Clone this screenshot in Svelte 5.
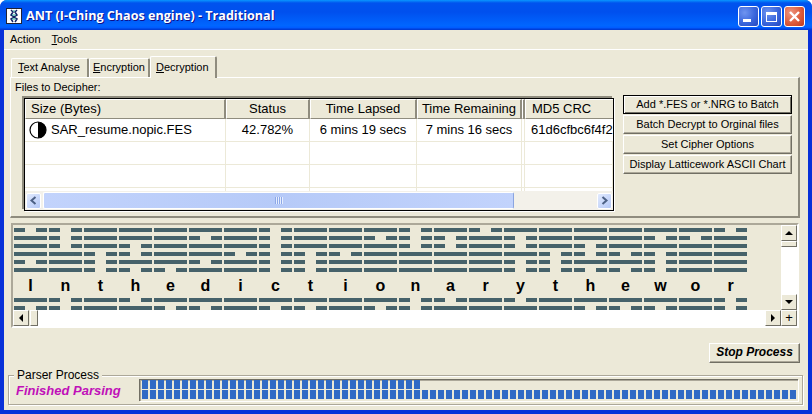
<script>
  const upper = [
    'BBSSSSSBSSSBSBSSSSSSB',
    'SBSSSBSBSSBBBSBSSSBBS',
    'SBSBSSSBSSSBBSBSBSSSS',
    'SSBBSSBBBBSSSSSBBBBSS',
    'BSBSSBSBBSSSSSBBSSBSS',
    'SSBBBSSBBSSSSSBBBBBSS'
  ];
  const lower = [
    'SBSBSSSSSSSBBSBSSSSSB',
    'BBSSBBSBBSBBSSSSBBBSB'
  ];
  const letters = 'Inthedictionarythewor'.split('');
  const columns = [
    { label: 'Size (Bytes)', value: 'SAR_resume.nopic.FES', cls: 'first' },
    { label: 'Status', value: '42.782%', cls: 'center' },
    { label: 'Time Lapsed', value: '6 mins 19 secs', cls: 'center' },
    { label: 'Time Remaining', value: '7 mins 16 secs', cls: 'center' },
    { label: '', value: '', cls: '' },
    { label: 'MD5 CRC', value: '61d6cfbc6f4f2', cls: 'md5' }
  ];
  const buttons = ['Add *.FES or *.NRG to Batch', 'Batch Decrypt to Orginal files', 'Set Cipher Options', 'Display Latticework ASCII Chart'];
  const topCells = Array(35).fill(0);
  const bottomCells = Array(82).fill(0);
  const emptyRows = [0, 1, 2];
</script>

<div class="window">
  <header class="titlebar">
    <svg class="appicon" width="16" height="16" viewBox="0 0 16 16">
      <rect x="0.5" y="0.5" width="15" height="15" fill="#fff" stroke="#223" />
      <path d="M5 2l2 2-2 3 3 2-3 2 2 3M11 2l-2 2 2 3-3 2 3 2-2 3" fill="none" stroke="#126" stroke-width="1.5" />
      <path d="M7 3h2M6 7h4M6 11h4" stroke="#2a9" stroke-width="1" />
    </svg>
    <span class="title">ANT (I-Ching Chaos engine) - Traditional</span>
    <div class="winbtns">
      <div class="winbtn"><span class="min"></span></div>
      <div class="winbtn"><span class="max"></span></div>
      <div class="winbtn close">
        <svg width="13" height="13" viewBox="0 0 13 13"><path d="M2 2l9 9M11 2l-9 9" stroke="#fff" stroke-width="2.4" /></svg>
      </div>
    </div>
  </header>

  <div class="client">
    <nav class="menu">
      <span>Action</span>
      <span><u>T</u>ools</span>
    </nav>

    <div class="tabs">
      <div class="tab t1"><u>T</u>ext Analyse</div>
      <div class="tab t2"><u>E</u>ncryption</div>
      <div class="tab active"><u>D</u>ecryption</div>
    </div>

    <section class="panel">
      <div class="files-label">Files to Decipher:</div>
      <div class="panel-row">
        <div class="listframe">
          <div class="list">
            <div class="list-head">
              {#each columns as c}
                <div class="hcell {c.cls}">{c.label}</div>
              {/each}
            </div>
            <div class="list-row">
              {#each columns as c}
                <div class="cell {c.cls}">
                  {#if c.cls === 'first'}
                    <svg class="moon" width="18" height="18" viewBox="0 0 18 18">
                      <circle cx="9" cy="9" r="8" fill="#fff" stroke="#000" stroke-width="1.2" />
                      <path d="M9 1a8 8 0 0 1 0 16z" fill="#000" />
                    </svg>
                  {/if}
                  {c.value}
                </div>
              {/each}
            </div>
            {#each emptyRows as r}
              <div class="list-row">
                {#each columns as c}
                  <div class="cell"></div>
                {/each}
              </div>
            {/each}
          </div>
          <div class="hbar">
            <div class="xpbtn">
              <svg width="9" height="9" viewBox="0 0 9 9"><path d="M6.5 1L2.5 4.5l4 3.5" fill="none" stroke="#4d6185" stroke-width="2" /></svg>
            </div>
            <div class="xpthumb"><span class="grip"></span></div>
            <div class="xpbtn">
              <svg width="9" height="9" viewBox="0 0 9 9"><path d="M2.5 1l4 3.5-4 3.5" fill="none" stroke="#4d6185" stroke-width="2" /></svg>
            </div>
          </div>
        </div>
        <div class="actions">
          {#each buttons as b, i}
            <div class="btn" class:default={i === 0}>{b}</div>
          {/each}
        </div>
      </div>
    </section>

    <section class="lattice-box">
      <div class="lattice-main">
        <div class="lattice">
          {#each upper as row}
            <div class="bars">
              {#each row.split('') as t}
                <div class="bar" class:broken={t === 'B'}><i></i>{#if t === 'B'}<i></i>{/if}</div>
              {/each}
            </div>
          {/each}
          <div class="letters">
            {#each letters as l}<span>{l}</span>{/each}
          </div>
          {#each lower as row}
            <div class="bars">
              {#each row.split('') as t}
                <div class="bar" class:broken={t === 'B'}><i></i>{#if t === 'B'}<i></i>{/if}</div>
              {/each}
            </div>
          {/each}
        </div>
        <div class="vbar">
          <div class="cbtn"><span class="arrow up"></span></div>
          <div class="cbtn vthumb"></div>
          <div class="track"></div>
          <div class="cbtn"><span class="arrow down"></span></div>
        </div>
      </div>
      <div class="hscroll">
        <div class="cbtn"><span class="arrow left"></span></div>
        <div class="cbtn hthumb"></div>
        <div class="track"></div>
        <div class="cbtn"><span class="arrow right"></span></div>
        <div class="cbtn plus">+</div>
      </div>
    </section>

    <div class="stop-row">
      <div class="stop">Stop Process</div>
    </div>

    <section class="group">
      <span class="legend">Parser Process</span>
      <div class="finished">Finished Parsing</div>
      <div class="progress">
        <div class="prow">{#each topCells as _}<b></b>{/each}</div>
        <div class="prow">{#each bottomCells as _}<b></b>{/each}</div>
      </div>
    </section>
  </div>
</div>

<style>
  :global(body) { margin: 0; background: #fff; }
  .window {
    width: 812px; height: 414px; display: flex; flex-direction: column; overflow: hidden;
    background: #0831d9; border-radius: 7px 7px 0 0;
    font-family: "Liberation Sans", Arial, sans-serif; font-size: 11px; color: #000;
  }
  .titlebar {
    height: 30px; flex: none; display: flex; align-items: center; padding: 0 7px 0 6px; box-sizing: border-box;
    background: linear-gradient(180deg, #0997ff 0, #0053ee 10%, #0050ee 40%, #0066ff 85%, #005bff 93%, #003dd7 97%, #003dd7 100%);
  }
  .appicon { flex: none; margin-top: 1px; }
  .title {
    margin-left: 4px; color: #fff; font-family: "Open Sans", sans-serif; font-weight: 700; font-size: 12.6px;
    text-shadow: 1px 1px 0 #0f1089; white-space: nowrap; flex: 1;
  }
  .winbtns { display: flex; gap: 2px; margin-top: 3px; }
  .winbtn {
    width: 21px; height: 21px; box-sizing: border-box; border: 1px solid #fff; border-radius: 3px; position: relative;
    background: radial-gradient(circle at 30% 30%, #6f94f0 0, #3a66dc 55%, #2347c0 100%);
    display: flex; align-items: center; justify-content: center;
  }
  .winbtn.close { background: radial-gradient(circle at 30% 30%, #ee9680 0, #dd5c3c 55%, #bc3a1c 100%); }
  .min { width: 8px; height: 3px; background: #fff; position: absolute; left: 4px; bottom: 4px; }
  .max { width: 11px; height: 10px; box-sizing: border-box; border: 1px solid #fff; border-top-width: 3px; }

  .client {
    flex: 1; margin: 0 4px 4px; background: #ece9d8; display: flex; flex-direction: column; min-height: 0;
  }
  .menu {
    flex: none; border-bottom: 1px solid #fff; display: flex; gap: 11px; padding: 3px 0 0 6px;
    height: 16px; line-height: 13px;
  }
  .tabs { display: flex; align-items: flex-end; height: 21px; margin: 6px 0 0 7px; flex: none; position: relative; z-index: 1; }
  .tab {
    height: 19px; box-sizing: border-box; padding-top: 2px; line-height: 13px;
    border: 1px solid #fff; border-bottom: 0; border-right: 2px solid #8f8c7e; border-radius: 2px 2px 0 0;
    white-space: nowrap;
  }
  .t1 { width: 78px; padding-left: 6px; }
  .t2 { width: 61px; padding-left: 3px; }
  .tab.active { height: 22px; margin-bottom: -1px; padding-top: 4px; background: #ece9d8; width: 67px; padding-left: 5px; }

  .panel {
    flex: none; margin-left: 6px; width: 790px; height: 141px; box-sizing: border-box;
    border: 1px solid #fff; border-right: 2px solid #8f8c7e; border-bottom: 2px solid #8f8c7e;
    padding: 3px 0 0 4px;
  }
  .files-label { height: 13px; line-height: 13px; }
  .panel-row { display: flex; margin-top: 1px; align-items: flex-start; }
  .listframe {
    width: 590px; height: 113px; box-sizing: border-box; margin: 3px 0 0 9px; border: 1px solid #000; background: #fff;
    box-shadow: -2px -2px 0 0 #8f8c7e, 1px 1px 0 #fff; display: flex; flex-direction: column; overflow: hidden;
  }
  .list { flex: 1; min-height: 0; overflow: hidden; font-size: 13px; }
  .list-head, .list-row { display: grid; grid-template-columns: 201px 84px 107px 105px 3px 88px; }
  .list-head { height: 20px; background: #ece9d8; }
  .hcell {
    box-sizing: border-box; height: 20px; line-height: 17px; white-space: nowrap; overflow: hidden;
    border-top: 1px solid #fff; border-left: 1px solid #fff; border-right: 2px solid #8f8c7e; border-bottom: 1px solid #8f8c7e;
    text-align: center;
  }
  .hcell.first { text-align: left; padding-left: 5px; }
  .hcell.md5 { text-align: left; padding-left: 6px; border-right: 0; }
  .list-row { height: 23px; }
  .cell {
    box-sizing: border-box; height: 23px; line-height: 22px; border-right: 1px solid #ece9d8; border-bottom: 1px solid #ece9d8;
    white-space: nowrap; overflow: hidden; display: flex; align-items: center;
  }
  .cell.center { justify-content: center; }
  .cell.first { padding-left: 4px; gap: 4px; }
  .cell.md5 { padding-left: 6px; border-right: 0; }
  .moon { flex: none; }

  .hbar {
    height: 19px; flex: none; display: flex; align-items: center; gap: 2px; background: #f3f1ea; padding: 0 1px; box-sizing: border-box;
    position: relative;
  }
  .xpbtn {
    width: 15px; height: 16px; flex: none; border-radius: 2px; border: 1px solid #fff; box-sizing: border-box;
    background: linear-gradient(135deg, #e1eafe, #b4c8f6); display: flex; align-items: center; justify-content: center;
  }
  .xpthumb {
    width: 471px; height: 17px; flex: none; box-sizing: border-box; border-radius: 2px; border: 1px solid #fff; border-right-color: #8ba5e0;
    background: linear-gradient(90deg, #c2d3fc, #b6caf8 50%, #c2d3fc); display: flex; align-items: center; justify-content: center;
  }
  .grip { width: 8px; height: 7px; background: repeating-linear-gradient(90deg, #8da8e8 0 1px, #e6eeff 1px 2px); }
  .hbar .xpbtn:last-child { margin-left: auto; }

  .actions { display: flex; flex-direction: column; gap: 1px; margin-left: 9px; }
  .btn {
    width: 169px; height: 19px; box-sizing: border-box; line-height: 16px; text-align: center; white-space: nowrap;
    border: 1px solid; border-color: #fff #716f64 #716f64 #fff; box-shadow: inset -1px -1px 0 #aca899;
  }
  .btn.default { border: 1px solid #000; box-shadow: inset 1px 1px 0 #fff, inset -1px -1px 0 #716f64; }

  .lattice-box {
    flex: none; margin: 5px 0 0 7px; width: 788px; height: 105px; box-sizing: border-box;
    border: 2px solid; border-color: #aca899 #fff #fff #aca899; display: flex; flex-direction: column;
  }
  .lattice-main { flex: 1; min-height: 0; display: flex; }
  .lattice { flex: 1; overflow: hidden; padding: 3px 0 0 1px; }
  .bars { display: flex; gap: 2px; height: 4px; margin-bottom: 4px; }
  .bar { width: 33px; flex: none; display: flex; justify-content: space-between; }
  .bar i { display: block; width: 100%; height: 4px; background: #46626a; }
  .bar.broken i { width: 11px; }
  .letters { display: flex; gap: 2px; height: 26px; margin-top: -4px; align-items: center; }
  .letters span { width: 33px; flex: none; text-align: center; font-size: 16px; font-weight: 700; line-height: 26px; padding-top: 1px; }
  .vbar { width: 16px; flex: none; display: flex; flex-direction: column; }
  .track { flex: 1; background: #fff; }
  .cbtn {
    box-sizing: border-box; width: 16px; height: 16px; flex: none; background: #ece9d8; position: relative;
    border: 1px solid; border-color: #fff #716f64 #716f64 #fff; display: flex; align-items: center; justify-content: center;
  }
  .vthumb { height: 6px; }
  .hthumb { width: 8px; height: 16px; margin-left: 1px; }
  .hscroll { height: 16px; flex: none; display: flex; }
  .plus { font-size: 13px; line-height: 14px; }
  .arrow { width: 0; height: 0; border: 0 solid transparent; }
  .arrow.up { border-width: 0 4px 4px; border-bottom-color: #000; }
  .arrow.down { border-width: 4px 4px 0; border-top-color: #000; }
  .arrow.left { border-width: 4px 4px 4px 0; border-right-color: #000; }
  .arrow.right { border-width: 4px 0 4px 4px; border-left-color: #000; }

  .stop-row { display: flex; justify-content: flex-end; margin-top: 15px; padding-right: 8px; flex: none; }
  .stop {
    width: 91px; height: 20px; box-sizing: border-box; line-height: 17px; text-align: center;
    font-weight: 700; font-style: italic; font-size: 12px; white-space: nowrap;
    border: 1px solid; border-color: #fff #716f64 #716f64 #fff; box-shadow: inset -1px -1px 0 #aca899;
  }

  .group {
    flex: none; margin: 12px 0 0 4px; width: 795px; height: 30px; box-sizing: border-box; position: relative;
    border: 1px solid #aca899; box-shadow: inset 1px 1px 0 #fff, 1px 1px 0 #fff;
    display: flex; align-items: flex-start; padding: 3px 4px 0 7px;
  }
  .legend { position: absolute; left: 5px; top: -7px; background: #ece9d8; padding: 0 3px; font-size: 12px; line-height: 13px; }
  .finished { width: 123px; flex: none; margin-top: 4px; font-weight: 700; font-style: italic; font-size: 13px; line-height: 16px; color: #c010b8; white-space: nowrap; }
  .progress {
    flex: 1; height: 22px; box-sizing: border-box; padding: 0 0 0 2px; display: flex; flex-direction: column; gap: 1px;
    border-top: 1px solid #716f64; border-left: 1px solid #716f64; box-shadow: inset 1px 1px 0 #aca899, 1px 1px 0 #fff;
  }
  .prow { display: flex; gap: 2px; height: 9px; }
  .prow b { display: block; width: 6px; height: 9px; background: #316ac5; flex: none; }
</style>
